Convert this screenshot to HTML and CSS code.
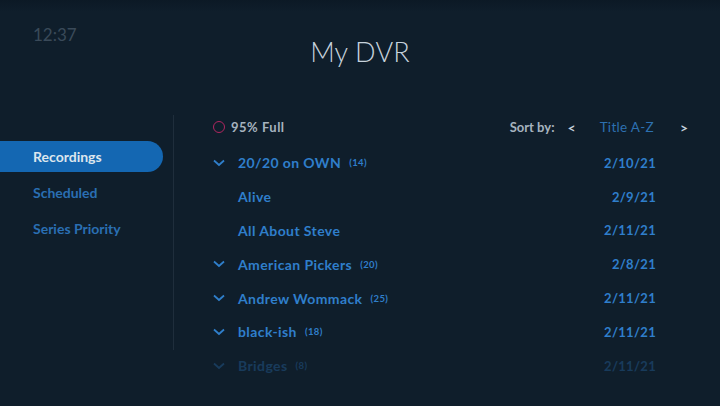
FILE: index.html
```html
<!DOCTYPE html>
<html>
<head>
<meta charset="utf-8">
<link rel="stylesheet" href="styles.css">
</head>
<body>
<div class="screen">
  <header class="top">
    <div class="clock">12:37</div>
    <h1 class="title">My DVR</h1>
    <div></div>
  </header>
  <main class="main">
    <nav class="side">
      <div class="nav-item active">Recordings</div>
      <div class="nav-item">Scheduled</div>
      <div class="nav-item">Series Priority</div>
    </nav>
    <section class="content">
      <div class="status">
        <div class="full"><span class="ring"></span><span>95% Full</span></div>
        <div class="sort"><span class="sort-label">Sort by:</span><span class="arrow">&lt;</span><span class="sort-val">Title A-Z</span><span class="arrow">&gt;</span></div>
      </div>
      <ul class="list">
        <li class="row"><span class="chev"><svg width="12" height="8" viewBox="0 0 12 8"><path d="M1 1.5 L6 6 L11 1.5" fill="none" stroke="currentColor" stroke-width="1.8"/></svg></span><span class="name">20/20 on OWN</span><span class="count">(14)</span><span class="date">2/10/21</span></li>
        <li class="row sub"><span class="chev"></span><span class="name">Alive</span><span class="date">2/9/21</span></li>
        <li class="row sub"><span class="chev"></span><span class="name">All About Steve</span><span class="date">2/11/21</span></li>
        <li class="row"><span class="chev"><svg width="12" height="8" viewBox="0 0 12 8"><path d="M1 1.5 L6 6 L11 1.5" fill="none" stroke="currentColor" stroke-width="1.8"/></svg></span><span class="name">American Pickers</span><span class="count">(20)</span><span class="date">2/8/21</span></li>
        <li class="row"><span class="chev"><svg width="12" height="8" viewBox="0 0 12 8"><path d="M1 1.5 L6 6 L11 1.5" fill="none" stroke="currentColor" stroke-width="1.8"/></svg></span><span class="name">Andrew Wommack</span><span class="count">(25)</span><span class="date">2/11/21</span></li>
        <li class="row"><span class="chev"><svg width="12" height="8" viewBox="0 0 12 8"><path d="M1 1.5 L6 6 L11 1.5" fill="none" stroke="currentColor" stroke-width="1.8"/></svg></span><span class="name">black-ish</span><span class="count">(18)</span><span class="date">2/11/21</span></li>
        <li class="row faded"><span class="chev"><svg width="12" height="8" viewBox="0 0 12 8"><path d="M1 1.5 L6 6 L11 1.5" fill="none" stroke="currentColor" stroke-width="1.8"/></svg></span><span class="name">Bridges</span><span class="count">(8)</span><span class="date">2/11/21</span></li>
      </ul>
    </section>
  </main>
</div>
</body>
</html>
```
FILE: styles.css
```css
html, body {
  margin: 0;
  padding: 0;
}
body {
  background: #0f1e2b;
  font-family: Lato, "Open Sans", sans-serif;
  width: 720px;
  height: 406px;
  overflow: hidden;
}
.screen {
  width: 720px;
  height: 406px;
  background: linear-gradient(#0c1925 0px, #0f1e2b 12px, #0f1e2b 100%);
}
.top {
  display: grid;
  grid-template-columns: 1fr auto 1fr;
  align-items: start;
  height: 115px;
}
.clock {
  padding: 24px 0 0 33px;
  font-size: 17px;
  color: #3a4a59;
  font-weight: 400;
}
.title {
  margin: 35px 0 0 0;
  font-size: 27px;
  font-weight: 300;
  color: #c6d2dc;
  letter-spacing: 0.2px;
}
.main {
  display: flex;
}
.side {
  width: 174px;
  box-sizing: border-box;
  border-right: 1px solid #1f2e3c;
  height: 235px;
  padding-top: 26px;
  display: flex;
  flex-direction: column;
  gap: 5px;
}
.nav-item {
  width: 163px;
  height: 31px;
  box-sizing: border-box;
  padding-left: 33px;
  display: flex;
  align-items: center;
  font-size: 14px;
  font-weight: 700;
  color: #2a6fb3;
}
.nav-item.active {
  background: #1467b2;
  border-radius: 0 16px 16px 0;
  color: #dce6ee;
}
.content {
  flex: 1;
  padding-left: 39px;
  padding-right: 32px;
}
.status {
  display: flex;
  justify-content: space-between;
  align-items: center;
  height: 24px;
}
.full {
  display: flex;
  align-items: center;
  gap: 6px;
  font-size: 13px;
  letter-spacing: 0.5px;
  color: #a6b3bf;
  font-weight: 700;
}
.ring {
  width: 10px;
  height: 10px;
  border: 1.6px solid #b0265f;
  border-radius: 50%;
}
.sort {
  display: flex;
  align-items: center;
  font-size: 13px;
  font-weight: 700;
}
.sort-label {
  color: #a6b3bf;
  margin-right: 13px;
}
.arrow {
  color: #c6d2dc;
  font-size: 14px;
}
.sort-val {
  color: #2d70b0;
  margin: 0 26px 0 24px;
  font-weight: 400;
  font-size: 13.5px;
  letter-spacing: 0.3px;
}
.list {
  list-style: none;
  margin: 7px 32px 0 0;
  padding: 0;
}
.row {
  display: flex;
  align-items: center;
  height: 33.8px;
  color: #2f7fcb;
  font-weight: 700;
  font-size: 14px;
  letter-spacing: 0.4px;
}
.chev {
  width: 25px;
  display: flex;
  align-items: center;
  color: #2f7fcb;
}
.count {
  font-size: 9.5px;
  margin-left: 8px;
}
.date {
  margin-left: auto;
  font-size: 13px;
  letter-spacing: 0.3px;
}
.faded {
  opacity: 0.3;
}
```
